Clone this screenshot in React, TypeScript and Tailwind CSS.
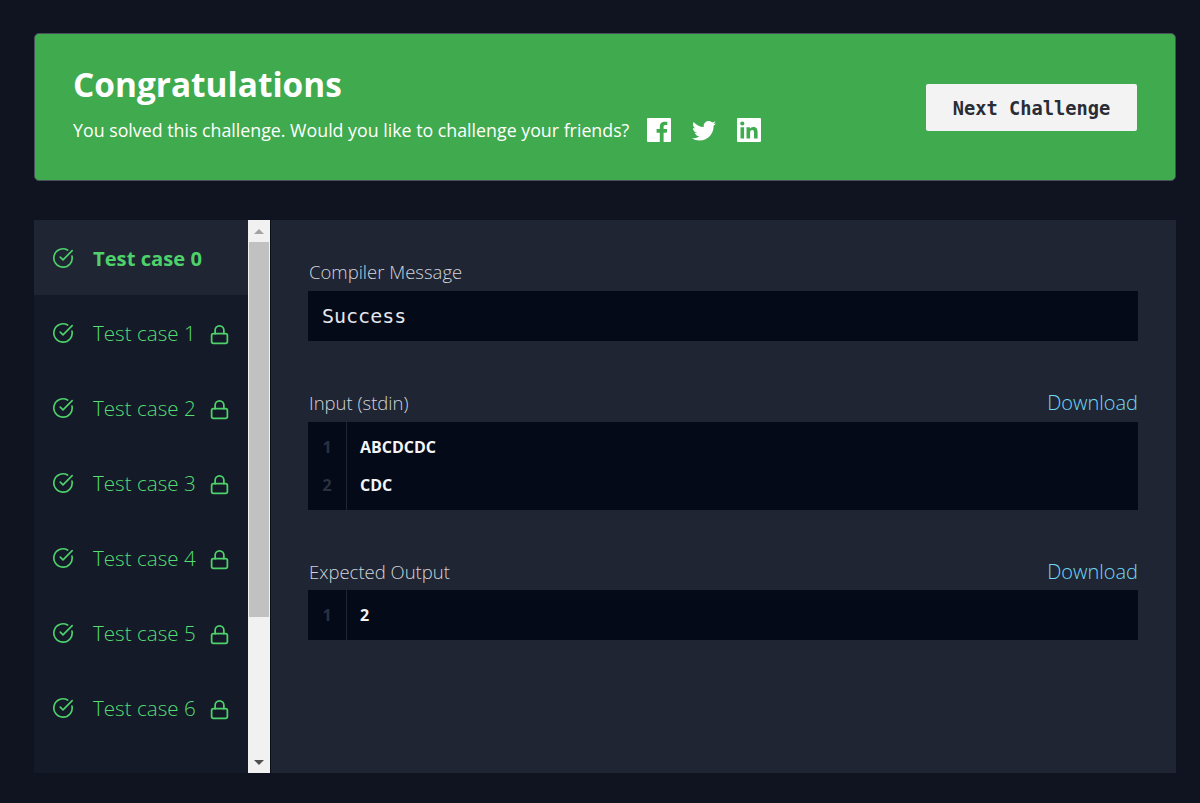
import { CircleCheckBig, Lock } from "lucide-react";
import { ImTwitter } from "react-icons/im";

const cases = [0, 1, 2, 3, 4, 5, 6];

function FacebookIcon() {
  return (
    <svg viewBox="0 0 24 24" className="ml-[18px] h-[24px] w-[24px] fill-white">
      <path d="M1 0H23a1 1 0 0 1 1 1V23a1 1 0 0 1-1 1H16.6V14.7h3.1l.5-3.6h-3.6V8.8c0-1 .3-1.8 1.8-1.8h1.9V3.8c-.3 0-1.5-.1-2.8-.1-2.8 0-4.7 1.7-4.7 4.8v2.6H9.6v3.6h3.2V24H1a1 1 0 0 1-1-1V1a1 1 0 0 1 1-1z" />
    </svg>
  );
}

function LinkedinIcon() {
  return (
    <svg viewBox="0 0 24 24" className="ml-[21px] h-[24px] w-[24px] fill-white">
      <path
        fillRule="evenodd"
        d="M1 0H23a1 1 0 0 1 1 1V23a1 1 0 0 1-1 1H1a1 1 0 0 1-1-1V1a1 1 0 0 1 1-1zM20.6 20.6h-3.6v-5.6c0-1.3 0-3-1.8-3s-2.1 1.4-2.1 2.9v5.7H9.5V9.2h3.4v1.6c.5-.9 1.6-1.8 3.4-1.8 3.6 0 4.3 2.4 4.3 5.5v6.1zM5.3 7.6a2.1 2.1 0 1 1 0-4.2 2.1 2.1 0 0 1 0 4.2zM7.1 20.6H3.5V9.2h3.6v11.4z"
      />
    </svg>
  );
}

function CaseRow({ n }: { n: number }) {
  const active = n === 0;
  return (
    <div className={active ? "flex h-[75px] items-center bg-[#1f2533] pl-[18px] pt-[1px]" : "flex h-[75px] items-center pl-[18px] pt-[1px]"}>
      <CircleCheckBig size={22} strokeWidth={1.8} className="text-[#4ed16a]" />
      <span className={active ? "ml-[19px] text-[20.2px] font-bold text-[#4ed16a]" : "ml-[19px] text-[20.6px] font-light text-[#55dd72]"}>
        Test case {n}
      </span>
      {!active && <Lock size={21} strokeWidth={2} className="ml-[13px] mt-[3px] text-[#4ed16a]" />}
    </div>
  );
}

function Scrollbar() {
  return (
    <div className="flex h-full w-[23px] flex-col border-r border-[#0b0f17] bg-[#f1f1f1]">
      <div className="flex h-[22px] items-center justify-center">
        <div className="h-0 w-0 border-x-[5px] border-b-[5px] border-x-transparent border-b-[#a3a3a3]" />
      </div>
      <div className="mx-px h-[375px] bg-[#c1c1c1]" />
      <div className="flex-1" />
      <div className="flex h-[21px] items-center justify-center">
        <div className="h-0 w-0 border-x-[5px] border-t-[5px] border-x-transparent border-t-[#505050]" />
      </div>
    </div>
  );
}

function CodeBox({ lines }: { lines: string[] }) {
  return (
    <div className="flex bg-[#040a18]">
      <div className="w-[39px] border-r border-[#1f2533] py-[6px] text-center text-[16px] font-bold text-[#2a3140]">
        {lines.map((_, i) => (
          <div key={i} className="flex h-[38px] items-center justify-center">
            {i + 1}
          </div>
        ))}
      </div>
      <div className="py-[6px] pl-[13px] text-[16px] font-bold text-[#f3f5f9]">
        {lines.map((line) => (
          <div key={line} className="flex h-[38px] items-center">
            {line}
          </div>
        ))}
      </div>
    </div>
  );
}

function Label({ text, download }: { text: string; download?: boolean }) {
  return (
    <div className="flex h-[24px] items-center justify-between">
      <span className="pl-px text-[18.5px] font-light text-[#d0d4db]">{text}</span>
      {download && <span className="text-[20px] font-light text-[#70d8f8]">Download</span>}
    </div>
  );
}

export default function App() {
  return (
    <div className="h-[803px] overflow-hidden bg-[#0f1420] pl-[34px] pr-[24px] pt-[33px] font-['Open_Sans',sans-serif]">
      <div className="flex h-[148px] items-center justify-between rounded-[5px] border border-[#4a5058] bg-[#3fab4e] pl-[38px] pr-[38px]">
        <div className="mb-[8px]">
          <h1 className="text-[33.4px] font-bold leading-[44px] text-white">Congratulations</h1>
          <div className="mt-[10px] flex items-center">
            <span className="text-[17.8px] leading-[28px] text-white">You solved this challenge. Would you like to challenge your friends?</span>
            <FacebookIcon />
            <ImTwitter size={24} className="ml-[21px] text-white" />
            <LinkedinIcon />
          </div>
        </div>
        <button
          type="button"
          className="h-[47px] w-[211px] rounded-[2px] bg-[#f3f3f3] pt-[4px] font-['DejaVu_Sans_Mono',monospace] text-[18.7px] font-bold text-[#2a2d36]"
        >
          Next Challenge
        </button>
      </div>

      <div className="mt-[39px] flex h-[553px]">
        <div className="h-full w-[214px] overflow-hidden bg-[#141a28]">
          {cases.map((n) => (
            <CaseRow key={n} n={n} />
          ))}
        </div>
        <Scrollbar />
        <div className="flex-1 bg-[#1f2533] pl-[37px] pr-[38px] pt-[40px]">
          <Label text="Compiler Message" />
          <div className="mt-[7px] flex h-[50px] items-center bg-[#040a18] pl-[14px] font-['DejaVu_Sans_Mono',monospace] text-[20px] text-[#e4e7ee]">
            Success
          </div>
          <div className="mt-[50px]">
            <Label text="Input (stdin)" download />
          </div>
          <div className="mt-[7px]">
            <CodeBox lines={["ABCDCDC", "CDC"]} />
          </div>
          <div className="mt-[50px]">
            <Label text="Expected Output" download />
          </div>
          <div className="mt-[6px]">
            <CodeBox lines={["2"]} />
          </div>
        </div>
      </div>
    </div>
  );
}
